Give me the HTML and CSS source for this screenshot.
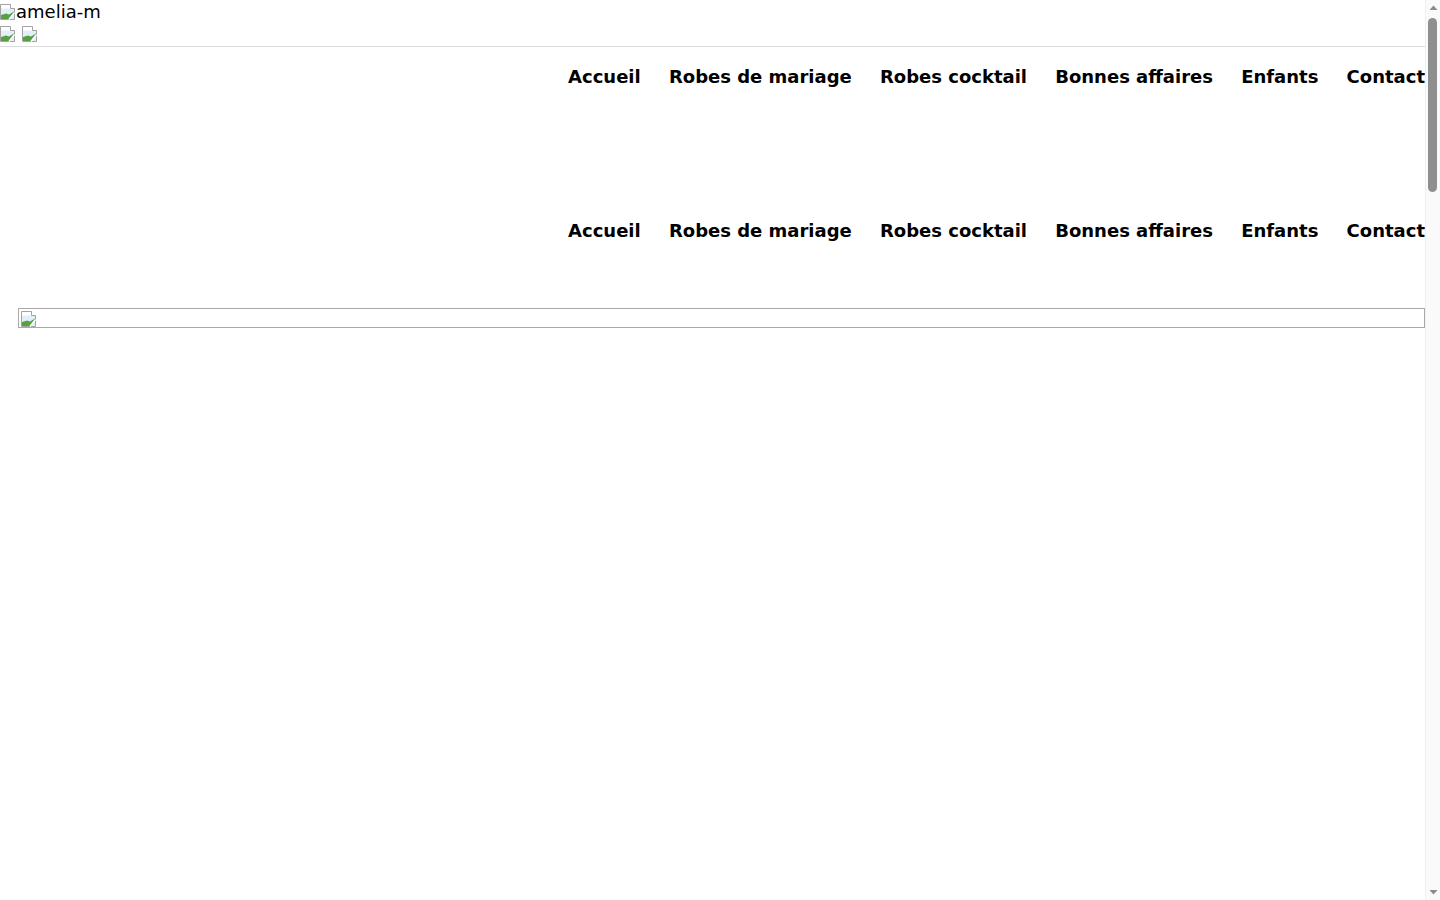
FILE: index.html
```html
<!DOCTYPE html>
<html lang="fr">
<head>
  <meta charset="UTF-8">
  <title>amelia-m</title>
  <link rel="stylesheet" href="styles.css">
</head>
<body>
  <div class="window">
    <div class="page">
      <header class="topbar">
        <div class="logo">
          <svg class="broken" width="16" height="16" viewBox="0 0 16 16">
            <path d="M0.5 0.5h10l4 4v11h-14z" fill="#e4eef8" stroke="#a3a3a3"/>
            <path d="M1 4.5h13V1H1z" fill="#fff"/>
            <path d="M1 15V11l5-1.5 3 1 5-3v1.5L8.5 15z" fill="#57a041"/>
            <path d="M9 15.5l5.5-7" stroke="#fff" stroke-width="1.5"/>
            <path d="M10.5 0.5v4h4" fill="#fff" stroke="#a3a3a3"/>
          </svg><span class="alt">amelia-m</span>
        </div>
        <div class="flags">
          <svg class="broken" width="16" height="16" viewBox="0 0 16 16">
            <path d="M0.5 0.5h10l4 4v11h-14z" fill="#e4eef8" stroke="#a3a3a3"/>
            <path d="M1 4.5h13V1H1z" fill="#fff"/>
            <path d="M1 15V11l5-1.5 3 1 5-3v1.5L8.5 15z" fill="#57a041"/>
            <path d="M9 15.5l5.5-7" stroke="#fff" stroke-width="1.5"/>
            <path d="M10.5 0.5v4h4" fill="#fff" stroke="#a3a3a3"/>
          </svg>
          <svg class="broken" width="16" height="16" viewBox="0 0 16 16">
            <path d="M0.5 0.5h10l4 4v11h-14z" fill="#e4eef8" stroke="#a3a3a3"/>
            <path d="M1 4.5h13V1H1z" fill="#fff"/>
            <path d="M1 15V11l5-1.5 3 1 5-3v1.5L8.5 15z" fill="#57a041"/>
            <path d="M9 15.5l5.5-7" stroke="#fff" stroke-width="1.5"/>
            <path d="M10.5 0.5v4h4" fill="#fff" stroke="#a3a3a3"/>
          </svg>
        </div>
      </header>

      <nav class="menu">
        <a href="#">Accueil</a>
        <a href="#">Robes de mariage</a>
        <a href="#">Robes cocktail</a>
        <a href="#">Bonnes affaires</a>
        <a href="#">Enfants</a>
        <a href="#">Contact</a>
      </nav>

      <nav class="menu menu-sticky">
        <a href="#">Accueil</a>
        <a href="#">Robes de mariage</a>
        <a href="#">Robes cocktail</a>
        <a href="#">Bonnes affaires</a>
        <a href="#">Enfants</a>
        <a href="#">Contact</a>
      </nav>

      <div class="banner">
        <svg class="broken" width="16" height="16" viewBox="0 0 16 16">
          <path d="M0.5 0.5h10l4 4v11h-14z" fill="#e4eef8" stroke="#a3a3a3"/>
          <path d="M1 4.5h13V1H1z" fill="#fff"/>
          <path d="M1 15V11l5-1.5 3 1 5-3v1.5L8.5 15z" fill="#57a041"/>
          <path d="M9 15.5l5.5-7" stroke="#fff" stroke-width="1.5"/>
          <path d="M10.5 0.5v4h4" fill="#fff" stroke="#a3a3a3"/>
        </svg>
      </div>
    </div>

    <!-- vertical scrollbar -->
    <div class="scrollbar">
      <svg class="arrow" width="15" height="15" viewBox="0 0 15 15"><path d="M3.5 10L7.5 5.5 11.5 10z" fill="#8a8a8a"/></svg>
      <div class="scroll-track">
        <div class="scroll-thumb"></div>
      </div>
      <svg class="arrow" width="15" height="15" viewBox="0 0 15 15"><path d="M3.5 5L7.5 9.5 11.5 5z" fill="#8a8a8a"/></svg>
    </div>
  </div>
</body>
</html>
```

FILE: styles.css
```css
body {
  margin: 0;
  padding: 0;
  font-family: "DejaVu Sans", sans-serif;
  font-size: 18px;
  color: #000;
  background: #fff;
  overflow: hidden;
}
.window {
  display: flex;
  height: 100vh;
}
.page {
  flex: 1;
  min-width: 0;
  overflow: hidden;
}
.topbar {
  height: 46px;
  border-bottom: 1px solid #dcdcdc;
}
.logo {
  display: flex;
  align-items: center;
  height: 24px;
}
.broken {
  display: block;
  flex: none;
}
.alt {
  line-height: 22px;
}
.flags {
  display: flex;
  gap: 6px;
  padding-top: 2px;
}
.menu {
  display: flex;
  justify-content: flex-end;
  gap: 28.2px;
  padding-top: 19px;
  line-height: 21px;
}
.menu a {
  color: #000;
  font-weight: bold;
  text-decoration: none;
}
.menu-sticky {
  padding-top: 133px;
}
.banner {
  margin: 67px 0 0 18px;
  height: 16px;
  border: 1px solid #a9a9a9;
  padding: 2px 0 0 2px;
}

/* scrollbar */
.scrollbar {
  width: 15px;
  flex: none;
  display: flex;
  flex-direction: column;
  background: #fafafa;
  border-left: 1px solid #f0f0f0;
  box-sizing: border-box;
}
.arrow {
  display: block;
  flex: none;
}
.scroll-track {
  flex: 1;
  padding: 3px 3px 0 2px;
}
.scroll-thumb {
  height: 174px;
  background: #8f8f8f;
  border-radius: 5px;
}
```
